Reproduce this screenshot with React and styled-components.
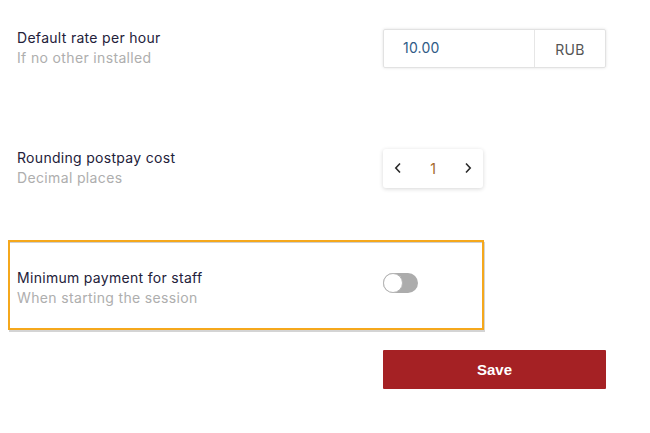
import React, { useState } from "react";
import styled, { createGlobalStyle } from "styled-components";

const Global = createGlobalStyle`
  html, body { margin: 0; padding: 0; background: #fff; }
  body { font-family: Inter, "Noto Sans", sans-serif; }
`;

const Page = styled.div`
  width: 650px;
  height: 433px;
  padding: 28px 8px 0;
  box-sizing: border-box;
  display: flex;
  flex-direction: column;
`;

const Row = styled.div`
  display: grid;
  grid-template-columns: 366px auto;
  align-items: center;
  padding-left: 9px;
  height: 40px;
  margin-bottom: ${(p) => p.$gap || 0}px;
`;

const Highlight = styled.div`
  width: 476px;
  height: 90px;
  box-sizing: border-box;
  border: 2px solid #f5a81c;
  box-shadow: inset 0 1px 0 #cfcfcf, 1px 2px 0 #d4d4d4;
  display: grid;
  grid-template-columns: 366px auto;
  align-items: start;
  padding: 26px 0 0 7px;
  margin-bottom: 20px;
`;

const Label = styled.div`
  display: flex;
  flex-direction: column;
`;

const Title = styled.div`
  font-size: 14px;
  line-height: 20px;
  color: #23213a;
  letter-spacing: 0.3px;
`;

const Sub = styled.div`
  font-size: 14px;
  line-height: 20px;
  color: #aeaeae;
  letter-spacing: 0.35px;
`;

const InputGroup = styled.div`
  width: 223px;
  height: 39px;
  box-sizing: border-box;
  border: 1px solid #e2e2e2;
  border-radius: 2px;
  box-shadow: 0 0 3px rgba(0, 0, 0, 0.12);
  display: flex;
`;

const Value = styled.div`
  width: 151px;
  padding-left: 19px;
  box-sizing: border-box;
  display: flex;
  align-items: center;
  font-size: 14px;
  color: #2f5b86;
  border-right: 1px solid #e6e6e6;
  padding-bottom: 2px;
  letter-spacing: 0.2px;
`;

const Suffix = styled.div`
  flex: 1;
  display: flex;
  align-items: center;
  justify-content: center;
  font-size: 14px;
  color: #555;
  padding-top: 2px;
  letter-spacing: 0.3px;
`;

const Stepper = styled.div`
  width: 100px;
  height: 39px;
  box-sizing: border-box;
  border-radius: 3px;
  box-shadow: 0 1px 4px rgba(0, 0, 0, 0.16);
  display: flex;
  align-items: center;
  justify-content: space-between;
  padding: 0 10px;
`;

const StepBtn = styled.button`
  border: none;
  background: none;
  padding: 0;
  width: 10px;
  height: 14px;
  display: flex;
  align-items: center;
  justify-content: center;
  cursor: pointer;
`;

const StepValue = styled.span`
  font-size: 14px;
  color: #a3682a;
`;

const Toggle = styled.button`
  margin-top: 5px;
  width: 35px;
  height: 20px;
  border: none;
  border-radius: 10px;
  background: #acacac;
  position: relative;
  padding: 0;
  cursor: pointer;
`;

const Knob = styled.span`
  position: absolute;
  top: 0;
  left: ${(p) => (p.$on ? 15 : 0)}px;
  width: 20px;
  height: 20px;
  box-sizing: border-box;
  border-radius: 50%;
  background: #fff;
  border: 1px solid #b5b5b5;
`;

const SaveRow = styled.div`
  padding-left: 375px;
`;

const SaveButton = styled.button`
  width: 223px;
  height: 39px;
  border: none;
  border-radius: 1px;
  background: #a52124;
  color: #fff;
  font-family: "Liberation Sans", Arial, sans-serif;
  font-weight: bold;
  font-size: 15px;
  cursor: pointer;
`;

const Chevron = ({ dir }) => (
  <svg width="8" height="12" viewBox="0 0 8 12" fill="none">
    <path
      d={dir === "left" ? "M6 1.5 L1.8 6 L6 10.5" : "M2 1.5 L6.2 6 L2 10.5"}
      stroke="#2a2a2a"
      strokeWidth="1.6"
    />
  </svg>
);

export default function App() {
  const [on, setOn] = useState(false);
  const [n, setN] = useState(1);
  return (
    <>
      <Global />
      <Page>
        <Row $gap={80}>
          <Label>
            <Title>Default rate per hour</Title>
            <Sub>If no other installed</Sub>
          </Label>
          <InputGroup>
            <Value>10.00</Value>
            <Suffix>RUB</Suffix>
          </InputGroup>
        </Row>
        <Row $gap={52}>
          <Label>
            <Title>Rounding postpay cost</Title>
            <Sub>Decimal places</Sub>
          </Label>
          <Stepper>
            <StepBtn onClick={() => setN(Math.max(0, n - 1))}>
              <Chevron dir="left" />
            </StepBtn>
            <StepValue>{n}</StepValue>
            <StepBtn onClick={() => setN(n + 1)}>
              <Chevron dir="right" />
            </StepBtn>
          </Stepper>
        </Row>
        <Highlight>
          <Label>
            <Title>Minimum payment for staff</Title>
            <Sub>When starting the session</Sub>
          </Label>
          <Toggle onClick={() => setOn(!on)}>
            <Knob $on={on} />
          </Toggle>
        </Highlight>
        <SaveRow>
          <SaveButton>Save</SaveButton>
        </SaveRow>
      </Page>
    </>
  );
}
